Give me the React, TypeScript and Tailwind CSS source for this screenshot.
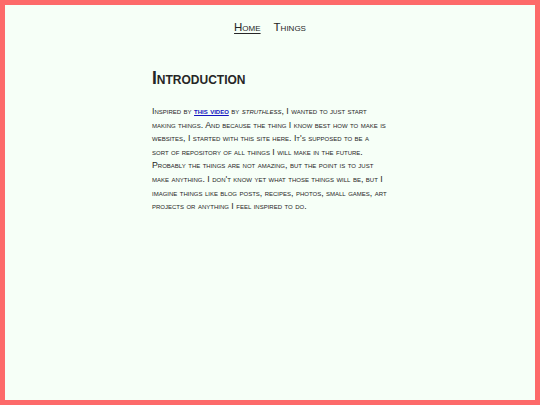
export default function App() {
  return (
    <div className="min-h-screen w-full border-[5px] border-[#fd6a6a] bg-[#f6fff7] text-[#262626] [font-family:'Liberation_Sans',Arial,sans-serif] [font-variant-caps:small-caps]">
      <nav className="flex justify-center gap-[13px] pt-[17px] text-[11.5px] leading-none">
        <a className="underline underline-offset-2">Home</a>
        <a>Things</a>
      </nav>
      <main className="mx-auto mt-[36px] w-[236px]">
        <h1 className="text-[17.5px] font-bold leading-none">Introduction</h1>
        <p className="mt-[18px] whitespace-nowrap text-[8.8px] leading-[13.6px]">
          Inspired by{" "}
          <a className="font-bold text-[#1414c0] underline">this video</a> by{" "}
          <em>struthless</em>, I wanted to just start
          <br />
          making things. And because the thing I know best how to make is
          <br />
          websites, I started with this site here. It's supposed to be a
          <br />
          sort of repository of all things I will make in the future.
          <br />
          Probably the things are not amazing, but the point is to just
          <br />
          make anything. I don't know yet what those things will be, but I
          <br />
          imagine things like blog posts, recipes, photos, small games, art
          <br />
          projects or anything I feel inspired to do.
        </p>
      </main>
    </div>
  )
}
